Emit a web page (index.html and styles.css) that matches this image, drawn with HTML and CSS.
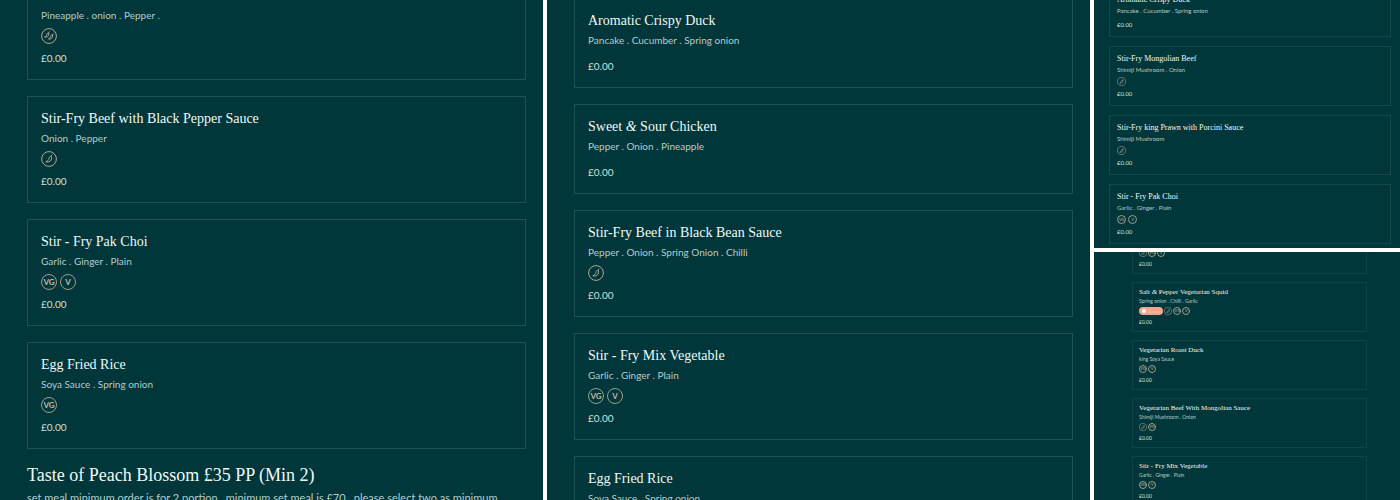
FILE: index.html
```html
<!DOCTYPE html>
<html lang="en">
<head>
  <meta charset="utf-8">
  <title>Peach Blossom Menu</title>
  <meta name="viewport" content="width=device-width, initial-scale=1.0">
  <link rel="stylesheet" href="styles.css">
</head>
<body>
  <!-- Icon shapes shared by all panels -->
  <svg class="defs" aria-hidden="true">
    <symbol id="chilli" viewBox="0 0 16 16">
      <circle cx="8" cy="8" r="7.4"/>
      <path d="M10.2 5.2C8.8 5.3 8.1 6.3 8 7.5C7.8 9.1 6.7 10.1 4.8 10.8C6.8 11.7 9.1 10.9 10.1 9C10.8 7.8 10.8 6.4 10.2 5.2C10.3 4.6 10.6 4.1 11.2 3.7"/>
    </symbol>
    <symbol id="chilli2" viewBox="0 0 16 16">
      <circle cx="8" cy="8" r="7.4"/>
      <path d="M7.6 4.8C6.4 4.9 5.9 5.7 5.8 6.5C5.6 7.6 4.9 8.4 3.5 8.9C5 9.6 6.7 8.9 7.4 7.5C7.9 6.6 7.9 5.7 7.6 4.8C7.7 4.3 7.9 4 8.4 3.6"/>
      <path d="M11.5 6.7C10.3 6.8 9.8 7.6 9.7 8.4C9.5 9.5 8.8 10.4 7.4 10.9C8.9 11.6 10.6 10.9 11.3 9.4C11.8 8.5 11.8 7.6 11.5 6.7C11.6 6.2 11.8 5.9 12.3 5.5"/>
    </symbol>
  </svg>

  <main class="board">
    <section class="panel panel-a">
      <div class="list">
        <article class="card">
          <h3>Sweet &amp; Sour Pork</h3>
          <p class="desc">Pineapple . onion . Pepper .</p>
          <div class="tags"><svg class="tag"><use href="#chilli2"/></svg></div>
          <p class="price">£0.00</p>
        </article>
        <article class="card">
          <h3>Stir-Fry Beef with Black Pepper Sauce</h3>
          <p class="desc">Onion . Pepper</p>
          <div class="tags"><svg class="tag"><use href="#chilli"/></svg></div>
          <p class="price">£0.00</p>
        </article>
        <article class="card">
          <h3>Stir - Fry Pak Choi</h3>
          <p class="desc">Garlic . Ginger . Plain</p>
          <div class="tags"><span class="tag">VG</span><span class="tag">V</span></div>
          <p class="price">£0.00</p>
        </article>
        <article class="card">
          <h3>Egg Fried Rice</h3>
          <p class="desc">Soya Sauce . Spring onion</p>
          <div class="tags"><span class="tag">VG</span></div>
          <p class="price">£0.00</p>
        </article>
      </div>
      <h2>Taste of Peach Blossom £35 PP (Min 2)</h2>
      <p class="note">set meal minimum order is for 2 portion , minimum set meal is £70 , please select two as minimum</p>
    </section>

    <section class="panel panel-b">
      <div class="list">
        <article class="card">
          <h3>Aromatic Crispy Duck</h3>
          <p class="desc">Pancake . Cucumber . Spring onion</p>
          <div class="tags"></div>
          <p class="price">£0.00</p>
        </article>
        <article class="card">
          <h3>Sweet <i>&amp;</i> Sour Chicken</h3>
          <p class="desc">Pepper . Onion . Pineapple</p>
          <div class="tags"></div>
          <p class="price">£0.00</p>
        </article>
        <article class="card">
          <h3>Stir-Fry Beef in Black Bean Sauce</h3>
          <p class="desc">Pepper . Onion . Spring Onion . Chilli</p>
          <div class="tags"><svg class="tag"><use href="#chilli"/></svg></div>
          <p class="price">£0.00</p>
        </article>
        <article class="card">
          <h3>Stir - Fry Mix Vegetable</h3>
          <p class="desc">Garlic . Ginger . Plain</p>
          <div class="tags"><span class="tag">VG</span><span class="tag">V</span></div>
          <p class="price">£0.00</p>
        </article>
        <article class="card">
          <h3>Egg Fried Rice</h3>
          <p class="desc">Soya Sauce . Spring onion</p>
          <div class="tags"><span class="tag">VG</span></div>
          <p class="price">£0.00</p>
        </article>
      </div>
    </section>

    <div class="side">
      <section class="panel panel-c">
        <div class="list">
          <article class="card">
            <h3>Aromatic Crispy Duck</h3>
            <p class="desc">Pancake . Cucumber . Spring onion</p>
            <div class="tags"></div>
            <p class="price">£0.00</p>
          </article>
          <article class="card">
            <h3>Stir-Fry Mongolian Beef</h3>
            <p class="desc">Shimiji Mushroom . Onion</p>
            <div class="tags"><svg class="tag"><use href="#chilli"/></svg></div>
            <p class="price">£0.00</p>
          </article>
          <article class="card">
            <h3>Stir-Fry king Prawn with Porcini Sauce</h3>
            <p class="desc">Shimiji Mushroom</p>
            <div class="tags"><svg class="tag"><use href="#chilli"/></svg></div>
            <p class="price">£0.00</p>
          </article>
          <article class="card">
            <h3>Stir - Fry Pak Choi</h3>
            <p class="desc">Garlic . Ginger . Plain</p>
            <div class="tags"><span class="tag">VG</span><span class="tag">V</span></div>
            <p class="price">£0.00</p>
          </article>
        </div>
      </section>

      <section class="panel panel-d">
        <div class="list">
          <article class="card">
            <h3>Vegetarian Duck</h3>
            <p class="desc">Pancake . Cucumber</p>
            <div class="tags"><svg class="tag"><use href="#chilli"/></svg><span class="tag">VG</span><span class="tag">V</span></div>
            <p class="price">£0.00</p>
          </article>
          <article class="card">
            <h3>Salt <i>&amp;</i> Pepper Vegetarian Squid</h3>
            <p class="desc">Spring onion . Chilli . Garlic</p>
            <div class="tags"><span class="pill">Special</span><svg class="tag"><use href="#chilli"/></svg><span class="tag">VG</span><span class="tag">V</span></div>
            <p class="price">£0.00</p>
          </article>
          <article class="card">
            <h3>Vegetarian Roast Duck</h3>
            <p class="desc">king Soya Sauce</p>
            <div class="tags"><span class="tag">VG</span><span class="tag">V</span></div>
            <p class="price">£0.00</p>
          </article>
          <article class="card">
            <h3>Vegetarian Beef With Mongolian Sauce</h3>
            <p class="desc">Shimiji Mushroom . Onion</p>
            <div class="tags"><svg class="tag"><use href="#chilli"/></svg><span class="tag">VG</span></div>
            <p class="price">£0.00</p>
          </article>
          <article class="card">
            <h3>Stir - Fry Mix Vegetable</h3>
            <p class="desc">Garlic . Ginger . Plain</p>
            <div class="tags"><span class="tag">VG</span><span class="tag">V</span></div>
            <p class="price">£0.00</p>
          </article>
        </div>
      </section>
    </div>
  </main>
</body>
</html>
```
FILE: styles.css
```css
* {
  box-sizing: border-box;
}
body {
  margin: 0;
  background: #fff;
  color: #dcebe6;
  font-family: Lato, "Open Sans", sans-serif;
}
h2, h3, p {
  margin: 0;
}
.defs {
  position: absolute;
  width: 0;
  height: 0;
}

/* Board: two wide panels and a stacked side column */
.board {
  display: grid;
  grid-template-columns: 543fr 543fr 306fr;
  gap: 4px;
  height: 100vh;
}
.side {
  display: grid;
  grid-template-rows: 1fr 1fr;
  gap: 4px;
  min-height: 0;
}
.panel {
  min-height: 0;
  overflow: hidden;
  background: #01363a;
}

/* Wide panels */
.panel {
  --title: 14px;
  --title-line: 21px;
  --desc: 10px;
  --desc-line: 19px;
  --price: 10px;
  --price-line: 18px;
  --icon: 16px;
  --icon-text: 8px;
  --icon-gap: 3px;
  --icon-top: 3px;
  --icon-bottom: 5px;
  --gap: 16px;
  --card-padding: 11px 13px 12px;
  --line: #1d5451;
  padding: 0 17px 0 27px;
}

/* Half-size panel */
.panel-c {
  --title: 8px;
  --title-line: 12px;
  --desc: 6px;
  --desc-line: 10px;
  --price: 6px;
  --price-line: 10px;
  --icon: 9px;
  --icon-text: 4px;
  --icon-gap: 2px;
  --icon-top: 2px;
  --icon-bottom: 3px;
  --gap: 9px;
  --card-padding: 6px 7px 6px;
  --line: #15494a;
  padding: 0 9px 0 15px;
}

/* Smallest panel */
.panel-d {
  --title: 7px;
  --title-line: 10px;
  --desc: 5px;
  --desc-line: 9px;
  --price: 5px;
  --price-line: 8px;
  --icon: 8px;
  --icon-text: 4px;
  --icon-gap: 1px;
  --icon-top: 1px;
  --icon-bottom: 3px;
  --gap: 8px;
  --card-padding: 4px 6px 5px;
  --line: #0f4345;
  padding: 0 33px 0 38px;
}

.list {
  display: flex;
  flex-direction: column;
  gap: var(--gap);
}
/* Each list is scrolled part of the way into its first card */
.panel-a .list {
  margin-top: -27px;
}
.panel-b .list {
  margin-top: -2px;
}
.panel-c .list {
  margin-top: -13px;
}
.panel-d .list {
  margin-top: -28px;
}

.card {
  padding: var(--card-padding);
  border: 1px solid var(--line);
}
.card h3 {
  font-family: "Liberation Serif", serif;
  font-size: var(--title);
  line-height: var(--title-line);
  font-weight: normal;
  color: #f0faf6;
  white-space: nowrap;
}
.desc {
  font-size: var(--desc);
  line-height: var(--desc-line);
  color: #b4cdc9;
  white-space: nowrap;
}
.price {
  font-size: var(--price);
  line-height: var(--price-line);
  color: #cfe0dc;
}
.tags {
  display: flex;
  align-items: center;
  gap: var(--icon-gap);
  margin: var(--icon-top) 0 var(--icon-bottom);
}
.tags:empty {
  margin-bottom: calc(var(--icon-bottom) - 1px);
}
.tag {
  display: flex;
  align-items: center;
  justify-content: center;
  width: var(--icon);
  height: var(--icon);
  font-size: var(--icon-text);
  line-height: 1;
  color: #c4b9a2;
}
svg.tag {
  fill: none;
  stroke: #b0a994;
  stroke-width: 1;
}
span.tag {
  border: 1px solid #a09d89;
  border-radius: 50%;
}
.panel-a .tag,
.panel-b .tag {
  font-weight: bold;
}
.pill {
  display: flex;
  align-items: center;
  gap: 2px;
  height: 8px;
  padding: 0 3px;
  border-radius: 4px;
  background: #f2a48c;
  color: #f8c4b2;
  font-size: 4px;
}
.pill::before {
  content: "";
  width: 4px;
  height: 4px;
  border-radius: 50%;
  background: #fff;
}

h2 {
  margin-top: 14px;
  font-family: "Liberation Serif", serif;
  font-size: 18px;
  line-height: 24px;
  font-weight: normal;
  color: #f0faf6;
  white-space: nowrap;
}
.note {
  font-size: 11px;
  line-height: 22px;
  color: #b4cdc9;
  white-space: nowrap;
}
```
